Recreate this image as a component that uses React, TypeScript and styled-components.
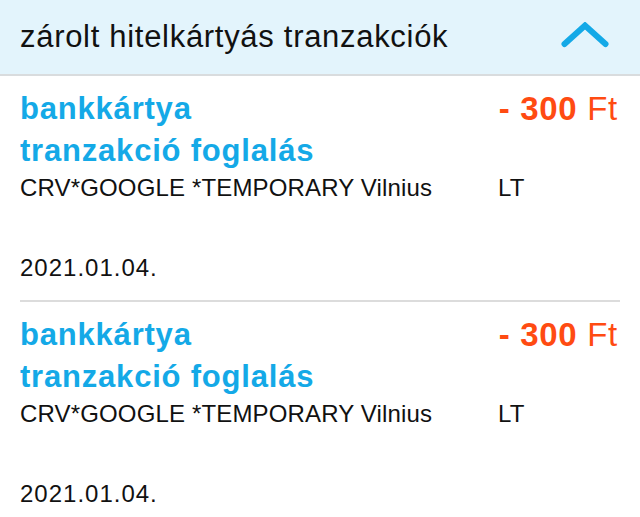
import React from 'react';
import styled, { createGlobalStyle } from 'styled-components';

const GlobalStyle = createGlobalStyle`
  body {
    margin: 0;
    background: #fff;
    font-family: "Liberation Sans", Arial, sans-serif;
  }
`;

const Page = styled.div`
  width: 640px;
  height: 517px;
  overflow: hidden;
  background: #fff;
`;

const Header = styled.div`
  height: 74px;
  background: #e3f4fc;
  border-bottom: 2px solid #d9dcde;
  display: flex;
  align-items: center;
  justify-content: space-between;
  padding: 0 31px 0 20px;

  h2 {
    margin: 0;
    font-size: 31px;
    letter-spacing: 0.7px;
    font-weight: 400;
    color: #111;
  }

  svg {
    margin-bottom: 4px;
  }
`;

const Item = styled.div`
  margin: 0 20px;
  padding: 12px 0 16px;
  border-bottom: 2px solid #dcdcdc;

  &:last-child {
    border-bottom: none;
  }
`;

const TopRow = styled.div`
  display: flex;
  justify-content: space-between;
  align-items: flex-start;
`;

const Title = styled.div`
  font-size: 31px;
  line-height: 42px;
  letter-spacing: 0.8px;
  font-weight: 700;
  color: #14a9e7;
`;

const Amount = styled.div`
  font-size: 33px;
  line-height: 42px;
  letter-spacing: 0.7px;
  color: #ff4b12;
  white-space: nowrap;
  margin-right: 2px;

  b {
    font-weight: 700;
  }
`;

const Merchant = styled.div`
  display: grid;
  grid-template-columns: 478px 1fr;
  font-size: 24px;
  line-height: 32px;
  letter-spacing: 0.15px;
  color: #111;
`;

const DateLine = styled.div`
  margin-top: 48px;
  font-size: 24px;
  line-height: 32px;
  letter-spacing: 1px;
  color: #111;
`;

const transactions = [
  { id: 1, amount: 300, merchant: 'CRV*GOOGLE *TEMPORARY Vilnius', country: 'LT', date: '2021.01.04.' },
  { id: 2, amount: 300, merchant: 'CRV*GOOGLE *TEMPORARY Vilnius', country: 'LT', date: '2021.01.04.' },
];

const App: React.FC = () => {
  return (
    <Page>
      <GlobalStyle />
      <Header>
        <h2>zárolt hitelkártyás tranzakciók</h2>
        <svg width="48" height="26" viewBox="0 0 48 26">
          <polyline
            points="3.5,22 24,3.5 44.5,22"
            fill="none"
            stroke="#14a9e7"
            strokeWidth="6"
            strokeLinecap="round"
            strokeLinejoin="miter"
          />
        </svg>
      </Header>
      {transactions.map((t) => (
        <Item key={t.id}>
          <TopRow>
            <Title>
              bankkártya
              <br />
              tranzakció foglalás
            </Title>
            <Amount>
              <b>- {t.amount}</b> Ft
            </Amount>
          </TopRow>
          <Merchant>
            <span>{t.merchant}</span>
            <span>{t.country}</span>
          </Merchant>
          <DateLine>{t.date}</DateLine>
        </Item>
      ))}
    </Page>
  );
};

export default App;
